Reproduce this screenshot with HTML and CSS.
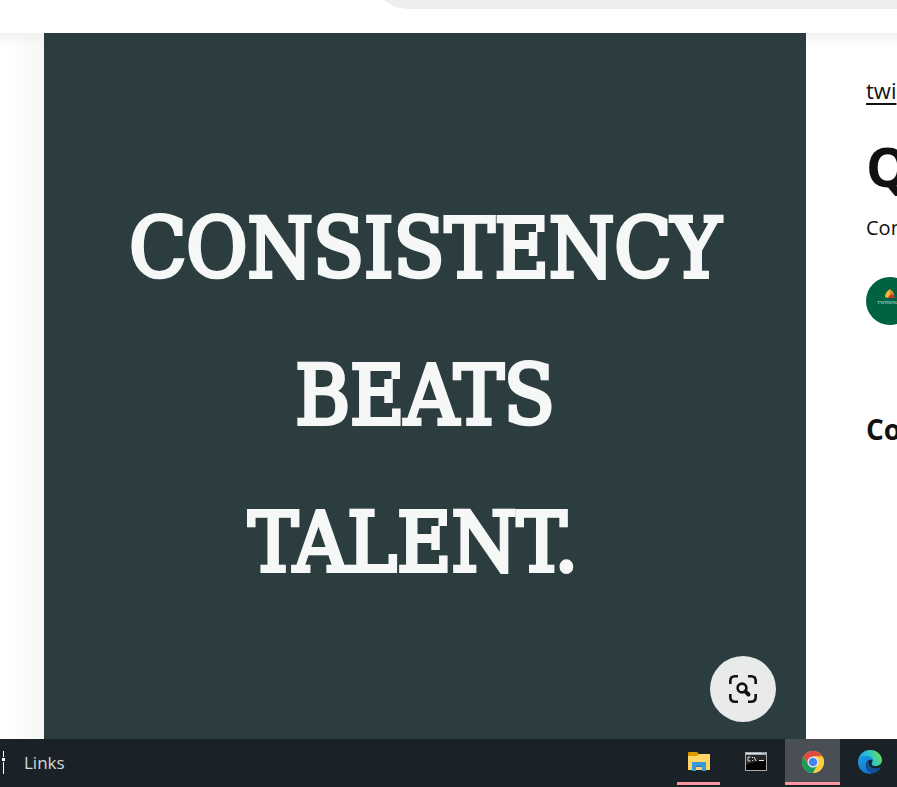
FILE: index.html
```html
<!DOCTYPE html>
<html lang="en">
<head>
<meta charset="utf-8">
<meta name="viewport" content="width=device-width, initial-scale=1">
<title>Pin</title>
<link rel="stylesheet" href="styles.css">
</head>
<body>
<header class="header"><div class="search"></div></header>
<main class="pin">
  <section class="poster">
    <p class="quote">CONSISTENCY<br>BEATS<br>TALENT.&nbsp;</p>
    <button class="lens" type="button" aria-label="Visual search">
      <svg viewBox="0 0 28 28" width="28" height="28" fill="none" stroke="#111" stroke-width="2.6">
        <path d="M1.3 9V6Q1.3 1.3 6 1.3H9M19 1.3h3Q26.7 1.3 26.7 6v3M26.7 19v3Q26.7 26.7 22 26.7h-3M9 26.7H6Q1.3 26.7 1.3 22v-3"/>
        <circle cx="13" cy="13" r="4.4"/>
        <path d="M16.3 16.3l3.2 3.2" stroke-width="4" stroke-linecap="round"/>
      </svg>
    </button>
  </section>
  <aside class="details">
    <a class="source" href="#">twi</a>
    <h1 class="title">Q</h1>
    <p class="summary">Con</p>
    <div class="avatar">
      <svg viewBox="0 0 48 48" width="48" height="48">
        <circle cx="24" cy="24" r="24" fill="#006241"/>
        <path d="M19 20Q19 15 24 12Q25 19 22 21Z" fill="#f5b82e"/>
        <path d="M24 12Q29 16 28 20L23 21Q25 17 24 12Z" fill="#ed8b22"/>
        <path d="M22 21Q23 18 27 17L29 21Z" fill="#c7342e"/>
        <text class="brand" x="11" y="27">TWININGS</text>
      </svg>
    </div>
    <h2 class="comments">Co</h2>
  </aside>
</main>
<footer class="taskbar">
  <svg class="grip" viewBox="0 0 5 24" width="5" height="24"><path d="M3 0h1v6H3zM2 7h3v3H2zM3 11h1v12H3z" fill="#fff"/></svg>
  <span class="links">Links</span>
  <nav class="apps" aria-label="Open apps">
    <button class="app app-running" type="button" aria-label="File Explorer">
      <svg viewBox="0 0 24 24" width="24" height="24">
        <path d="M1 3q0-1 1-1h8l2 2v3H1z" fill="#dc9900"/>
        <path d="M1 6h9l2-2h11v16H1z" fill="#ffd666"/>
        <path d="M5 12h14v9h-4v-5H9v5H5z" fill="#3898dc"/>
        <path d="M9 16h6v1H9z" fill="#2374b5"/>
      </svg>
    </button>
    <button class="app" type="button" aria-label="Command Prompt">
      <svg viewBox="0 0 24 24" width="24" height="24">
        <path d="M1 2h22v19H1z" fill="#a5adb2"/><path d="M2 3h20v1H2z" fill="#d8e0e5"/>
        <path d="M2 5h20v15H2z" fill="#030303"/><path d="M2 5h20v5Q11 11 2 15z" fill="#262626"/>
        <path d="M6.500 7H4v4h2.500M8 7.500h1M8 10.500h1M10 7l2 4M15 10.500h5" fill="none" stroke="#e5e5e5"/>
        <path d="M18 3h1M20 3h1" stroke="#52616c"/>
      </svg>
    </button>
    <button class="app app-running app-active" type="button" aria-label="Chrome">
      <svg viewBox="0 0 24 24" width="24" height="24">
        <circle cx="12" cy="12" r="11" fill="#ffcd42"/>
        <path d="M2.470 6.500A11 11 0 0 1 21.500 6.500H12L7.200 14.700z" fill="#db4b3f"/>
        <path d="M2.470 6.500A11 11 0 0 0 12 23l4.800-8.200H7.200z" fill="#189c5b"/>
        <path d="M12 6.500h9.500A11 11 0 0 1 12 23l4.800-8.200z" fill="#ffcd42"/>
        <circle cx="12" cy="12" r="5.500" fill="#f1f1f1"/><circle cx="12" cy="12" r="4.300" fill="#4686f4"/>
      </svg>
    </button>
    <button class="app" type="button" aria-label="Edge">
      <svg viewBox="0 0 24 24" width="24" height="24">
        <defs>
          <linearGradient id="wave" x1="0" y1="0.600" x2="1" y2="0.300"><stop offset="0" stop-color="#1b9de2"/><stop offset="0.500" stop-color="#2cc3d2"/><stop offset="1" stop-color="#6be04c"/></linearGradient>
          <linearGradient id="body" x1="0" y1="0" x2="0.600" y2="1"><stop offset="0" stop-color="#1b9de2"/><stop offset="1" stop-color="#1274ce"/></linearGradient>
        </defs>
        <path d="M0 11C1 4 6 0 12 0c7 0 12 5 12 10 0 4-3 6-6 6-4 0-5-1-4-3 2-4-1-6-5-6-4 0-7 2-9 4z" fill="url(#wave)"/>
        <path d="M0 12C0 8 4 6 8 6c4 0 7 2 7 5-3-3-7 0-7 4 0 5 4 8 8 8C7 26 0 20 0 12z" fill="url(#body)"/>
        <path d="M11 10c-5 4-2 13 5 13 3-1 5-3 7-5 0-1-1 0-2 0-7 2-12-3-10-8z" fill="#10519e"/>
      </svg>
    </button>
  </nav>
</footer>
</body>
</html>
```
FILE: styles.css
```css
* { box-sizing: border-box; }

body {
  margin: 0;
  min-height: 100vh;
  display: grid;
  grid-template-rows: auto 1fr auto;
  overflow: hidden;
  background: #fff;
  color: #111;
  font-family: "Open Sans", "Noto Sans", sans-serif;
}

h1, h2, p { margin: 0; }

button {
  border: 0;
  padding: 0;
  display: flex;
  align-items: center;
  justify-content: center;
}

.header {
  padding: 0 0 24px 372px;
  overflow: hidden;
}

.search {
  height: 72px;
  margin-top: -63px;
  background: #eee;
  border-radius: 36px 0 0 36px;
}

.pin {
  display: flex;
  padding-left: 44px;
  background: linear-gradient(#f1f1f1, #fff0 14px), linear-gradient(90deg, #fff 10px, #f7f7f7 44px, #fff 44px);
}

.poster {
  flex: 1;
  display: flex;
  flex-direction: column;
  justify-content: space-between;
  background: #2c3d40;
  padding: 142px 30px 17px;
}

.quote {
  color: #f6f7f7;
  font-family: "DejaVu Serif Condensed", "DejaVu Serif", serif;
  font-size: 83px;
  line-height: 147px;
  text-align: center;
  white-space: nowrap;
  -webkit-text-stroke: 4px #f6f7f7;
}

.lens {
  align-self: flex-end;
  width: 66px;
  height: 66px;
  border-radius: 50%;
  background: #e9ebea;
}

.details {
  flex: none;
  width: 91px;
  padding: 39px 0 0 60px;
  overflow: hidden;
  white-space: nowrap;
}

.source {
  display: block;
  color: #111;
  font-size: 22px;
  line-height: 36px;
  text-underline-offset: 4px;
}

.title {
  margin-top: 22px;
  font-size: 54px;
  line-height: 72px;
}

.summary {
  margin-top: 10px;
  font-size: 20px;
  line-height: 32px;
}

.avatar {
  margin-top: 33px;
  width: 48px;
  height: 48px;
}

.avatar svg { display: block; }

.brand {
  fill: #d9e3d2;
  font-family: "Liberation Serif", serif;
  font-size: 5px;
}

.comments {
  margin-top: 84px;
  font-size: 28px;
  line-height: 40px;
}

.taskbar {
  height: 48px;
  display: flex;
  align-items: center;
  background: #1a2228;
  color: #d5d7d8;
}

.links {
  margin-left: 19px;
  font-size: 17px;
  line-height: 24px;
}

.apps {
  margin-left: auto;
  align-self: stretch;
  display: flex;
  gap: 2px;
}

.app {
  width: 55px;
  height: 46px;
  background: transparent;
}

.app-running {
  background: linear-gradient(#ff96a0, #ff96a0) center bottom / 43px 3px no-repeat;
}

.app-active {
  background: linear-gradient(#ff96a0, #ff96a0) center bottom / 100% 3px no-repeat #4a4f55;
}
```
